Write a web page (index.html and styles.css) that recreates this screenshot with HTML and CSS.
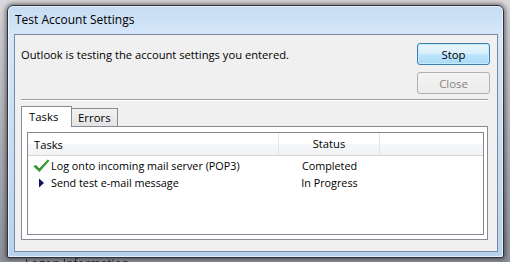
FILE: index.html
```html
<!DOCTYPE html>
<html lang="en">
<head>
  <meta charset="UTF-8">
  <title>Test Account Settings</title>
  <link rel="stylesheet" href="styles.css">
</head>
<body>
  <div class="desktop">
    <div class="window">
      <div class="titlebar">Test Account Settings</div>
      <div class="client">
        <div class="top-row">
          <p class="message">Outlook is testing the account settings you entered.</p>
          <div class="buttons">
            <button class="btn btn-default">Stop</button>
            <button class="btn" disabled>Close</button>
          </div>
        </div>
        <div class="separator"></div>

        <div class="tabs">
          <div class="tab tab-active">Tasks</div>
          <div class="tab">Errors</div>
        </div>
        <div class="tab-panel">
          <div class="list">
            <div class="list-header">
              <div class="col col-task">Tasks</div>
              <div class="col col-status">Status</div>
              <div class="col col-rest"></div>
            </div>
            <div class="list-row">
              <div class="col col-task">
                <svg class="row-icon" width="17" height="14" viewBox="0 0 17 14">
                  <path d="M0.5 7.5 L2.8 6 L6.3 9.6 L14.8 0.5 L16.5 1.6 L6.4 13 Z" fill="#1b821b"/>
                  <path d="M1.6 7.2 L6.3 11.6 L15.6 1.2" fill="none" stroke="#46c046" stroke-width="0.9"/>
                </svg>
                Log onto incoming mail server (POP3)
              </div>
              <div class="col col-status">Completed</div>
            </div>
            <div class="list-row">
              <div class="col col-task">
                <svg class="row-icon" width="17" height="14" viewBox="0 0 17 14">
                  <path d="M6 2.5 L11 7 L6 11.5 Z" fill="#10126a"/>
                </svg>
                Send test e-mail message
              </div>
              <div class="col col-status">In Progress</div>
            </div>
          </div>
        </div>
      </div>
    </div>
    <div class="behind">Logon Information</div>
  </div>
</body>
</html>
```

FILE: styles.css
```css
* {
  margin: 0;
  padding: 0;
  box-sizing: border-box;
}

body {
  width: 510px;
  height: 262px;
  overflow: hidden;
  font-family: "Open Sans", "Noto Sans", sans-serif;
  font-size: 11px;
  color: #000;
  background: linear-gradient(to bottom, #d9d9de 0, #c9c9cf 30px, #8e9098 100%);
}

.desktop {
  height: 262px;
  overflow: hidden;
}

.window {
  margin: 5px 0 0 7px;
  width: 497px;
  height: 253px;
  display: flex;
  flex-direction: column;
  border: 1px solid #2f3238;
  border-radius: 6px 6px 2px 2px;
  background: linear-gradient(to bottom, #c6dcf3 0, #d6e7f9 30px, #b6d2ee 100%);
  box-shadow: 0 0 5px 1px rgba(0, 0, 0, 0.55), inset 0 0 0 1px rgba(255, 255, 255, 0.6);
}

.titlebar {
  height: 28px;
  padding-left: 7px;
  line-height: 28px;
  font-size: 12px;
  color: #000;
}

.client {
  flex: 1;
  margin: 0 5px 5px 6px;
  display: flex;
  flex-direction: column;
  padding: 8px 7px 11px 6px;
  background: #f0f0f0;
  border: 1px solid #7a8ba0;
}

.top-row {
  display: flex;
  justify-content: space-between;
}

.message {
  margin-top: 4px;
  font-size: 11.2px;
}

.buttons {
  display: flex;
  flex-direction: column;
  gap: 7px;
}

.btn {
  width: 73px;
  height: 22px;
  font-family: inherit;
  font-size: 11.4px;
  color: #838383;
  border: 1px solid #adb2b5;
  border-radius: 3px;
  background: linear-gradient(to bottom, #f4f4f4, #ebebeb);
}

.btn-default {
  color: #000;
  border-color: #3c7fb1;
  background: linear-gradient(to bottom, #eaf6fd 0, #d9f0fc 50%, #bee6fd 51%, #a7d9f5 100%);
  box-shadow: inset 0 0 0 1px #c5ecfe;
}

.separator {
  margin: 5px 2px 4px 0;
  border-top: 1px solid #a0a0a0;
  border-bottom: 1px solid #fff;
}

.tabs {
  display: flex;
  align-items: flex-end;
  height: 21px;
  position: relative;
  z-index: 1;
}

.tab {
  height: 18px;
  padding: 0 6px;
  line-height: 17px;
  font-size: 11.4px;
  border: 1px solid #898c95;
  border-left: none;
  border-bottom: none;
  background: linear-gradient(to bottom, #f2f2f2, #e3e3e3);
}

.tab-active {
  width: 51px;
  height: 21px;
  padding-left: 7px;
  line-height: 19px;
  border-left: 1px solid #898c95;
  background: #fff;
  margin-bottom: -1px;
}

.tab-panel {
  flex: 1;
  margin-right: 2px;
  padding: 5px 3px 4px 5px;
  border: 1px solid #898c95;
  background: #fff;
}

.list {
  height: 100%;
  border: 1px solid #828790;
  background: #fff;
}

.list-header {
  display: flex;
  height: 23px;
  line-height: 21px;
  font-size: 11.2px;
  background: linear-gradient(to bottom, #fff 0, #fff 50%, #f6f7f8 51%, #f2f3f5 100%);
  border-bottom: 1px solid #d5d5d5;
}

.list-header .col-task,
.list-header .col-status {
  border-right: 1px solid #e3e5e8;
}

.col-task {
  width: 251px;
  padding-left: 6px;
  display: flex;
  align-items: center;
}

.col-status {
  width: 101px;
  text-align: center;
}

.col-rest {
  flex: 1;
}

.list-row {
  display: flex;
  height: 17px;
  line-height: 17px;
  font-size: 10.8px;
}

.list-row .col-task {
  padding-left: 5px;
}

.list-header + .list-row {
  margin-top: 1px;
}

.row-icon {
  margin-right: 1px;
  flex-shrink: 0;
}

.behind {
  margin-top: -3px;
  padding-left: 25px;
  font-size: 12px;
  color: #222;
  filter: blur(0.6px);
}
```
